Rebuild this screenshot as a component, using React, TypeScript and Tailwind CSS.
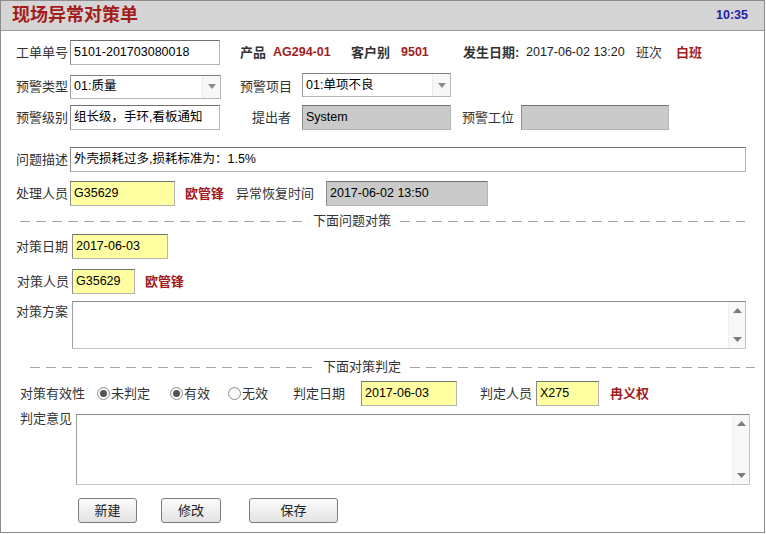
import React from "react";

const red = "text-[#a11d1d] font-bold";

function Box({ className, children }: { className: string; children?: React.ReactNode }) {
  return (
    <div
      className={
        "flex items-center h-[25px] px-[3px] border border-[#b4b4b4] border-t-[#707070] border-l-[#8c8c8c] text-[12.5px] text-black whitespace-nowrap overflow-hidden " +
        className
      }
    >
      {children}
    </div>
  );
}

function Select({ className, value }: { className: string; value: string }) {
  return (
    <div
      className={
        "flex items-center h-[24px] border border-[#b4b4b4] border-t-[#808080] border-l-[#9a9a9a] bg-white text-[12.5px] text-black " +
        className
      }
    >
      <span className="flex-1 pl-[3px] whitespace-nowrap">{value}</span>
      <span className="w-[18px] h-full flex items-center justify-center bg-[#f7f7f7] border-l border-[#ececec]">
        <svg width="8" height="5" viewBox="0 0 8 5">
          <path d="M0 0H8L4 5Z" fill="#8a8a8a" />
        </svg>
      </span>
    </div>
  );
}

function Area({ className }: { className: string }) {
  return (
    <div
      className={
        "flex border border-[#c4c4c4] border-t-[#8a8a8a] border-l-[#a0a0a0] bg-white " + className
      }
    >
      <div className="flex-1" />
      <div className="w-[17px] flex flex-col justify-between items-center py-[6px] bg-[#f8f8f8] border-l border-[#efefef]">
        <svg width="9" height="5" viewBox="0 0 9 5">
          <path d="M0 5H9L4.5 0Z" fill="#7a7a7a" />
        </svg>
        <svg width="9" height="5" viewBox="0 0 9 5">
          <path d="M0 0H9L4.5 5Z" fill="#7a7a7a" />
        </svg>
      </div>
    </div>
  );
}

function Radio({ checked }: { checked: boolean }) {
  return (
    <span className="w-[13px] h-[13px] rounded-full border border-[#8e8e8e] bg-linear-to-b from-[#f2f2f2] to-[#ffffff] flex items-center justify-center mr-[1px]">
      {checked ? <span className="w-[7px] h-[7px] rounded-full bg-[#555555]" /> : null}
    </span>
  );
}

function Btn({ className, label }: { className: string; label: string }) {
  return (
    <div
      className={
        "h-[25px] flex items-center justify-center rounded-[3px] border border-[#7d7d7d] bg-linear-to-b from-[#fbfbfb] to-[#e3e3e3] text-[13px] text-[#222] " +
        className
      }
    >
      {label}
    </div>
  );
}

const dash = "h-px bg-[image:repeating-linear-gradient(to_right,#a4a4a4_0_10px,transparent_10px_16px)]";

export default function App() {
  return (
    <div className="w-[766px] h-[534px] bg-white font-['Liberation_Sans','Noto_Sans_CJK_SC',sans-serif] text-[13px] text-[#333]">
      <div className="w-[765px] h-[533px] border border-[#8c8c8c] flex flex-col">
        {/* title bar */}
        <div className="h-[30px] bg-[#d5d5d5] border-b border-[#9c9c9c] flex items-center justify-between pl-[11px] pr-[16px]">
          <span className="text-[18px] font-bold text-[#a31d1d]">现场异常对策单</span>
          <span className="text-[12.5px] font-bold text-[#1f1fa6]">10:35</span>
        </div>

        <div className="flex flex-col pl-[15px]">
          {/* row 1 */}
          <div className="flex items-center h-[25px] mt-[9px]">
            <span className="w-[54px]">工单单号</span>
            <Box className="w-[150px] bg-white">5101-201703080018</Box>
            <span className="ml-[20px] w-[33px] font-bold">产品</span>
            <span className={"w-[78px] text-[12.5px] " + red}>AG294-01</span>
            <span className="w-[50px] font-bold">客户别</span>
            <span className={"w-[62px] text-[12.5px] " + red}>9501</span>
            <span className="w-[63px] font-bold">发生日期:</span>
            <span className="w-[110px] text-[12.5px] text-[#222]">2017-06-02 13:20</span>
            <span className="w-[40px]">班次</span>
            <span className={red}>白班</span>
          </div>

          {/* row 2 */}
          <div className="flex items-center h-[25px] mt-[9px]">
            <span className="w-[54px]">预警类型</span>
            <Select className="w-[151px]" value="01:质量" />
            <span className="ml-[19px] w-[62px]">预警项目</span>
            <Select className="w-[149px] -mt-[3px]" value="01:单项不良" />
          </div>

          {/* row 3 */}
          <div className="flex items-center h-[25px] mt-[6px]">
            <span className="w-[54px]">预警级别</span>
            <Box className="w-[150px] bg-white">组长级，手环,看板通知</Box>
            <span className="ml-[32px] w-[50px]">提出者</span>
            <Box className="w-[149px] bg-[#cacaca]">System</Box>
            <span className="ml-[11px] w-[59px]">预警工位</span>
            <Box className="w-[148px] bg-[#cacaca]" />
          </div>

          {/* row 4 */}
          <div className="flex items-center h-[25px] mt-[17px]">
            <span className="w-[54px]">问题描述</span>
            <Box className="w-[676px] bg-white">外壳损耗过多,损耗标准为：1.5%</Box>
          </div>

          {/* row 5 */}
          <div className="flex items-center h-[25px] mt-[9px]">
            <span className="w-[54px]">处理人员</span>
            <Box className="w-[105px] bg-[#ffffa2]">G35629</Box>
            <span className={"ml-[10px] w-[51px] " + red}>欧管锋</span>
            <span className="w-[90px]">异常恢复时间</span>
            <Box className="w-[162px] bg-[#cacaca]">2017-06-02 13:50</Box>
          </div>

          {/* divider 1 */}
          <div className="flex items-center h-[16px] mt-[7px]">
            <div className={"ml-[4px] w-[285px] " + dash} />
            <span className="ml-[8px] w-[78px]">下面问题对策</span>
            <div className={"ml-[9px] w-[345px] " + dash} />
          </div>

          {/* row 7 */}
          <div className="flex items-center h-[25px] mt-[5px]">
            <span className="w-[56px]">对策日期</span>
            <Box className="w-[96px] bg-[#ffffa2]">2017-06-03</Box>
          </div>

          {/* row 8 */}
          <div className="flex items-center h-[25px] mt-[10px]">
            <span className="w-[56px] pl-[1px]">对策人员</span>
            <Box className="w-[63px] bg-[#ffffa2]">G35629</Box>
            <span className={"ml-[10px] " + red}>欧管锋</span>
          </div>

          {/* row 9 */}
          <div className="flex items-start mt-[7px]">
            <span className="w-[56px] leading-[16px] mt-[3px]">对策方案</span>
            <Area className="w-[674px] h-[48px]" />
          </div>

          {/* divider 2 */}
          <div className="flex items-center h-[16px] mt-[10px]">
            <div className={"ml-[14px] w-[285px] " + dash} />
            <span className="ml-[8px] w-[78px]">下面对策判定</span>
            <div className={"ml-[9px] w-[345px] " + dash} />
          </div>

          {/* row 10 */}
          <div className="flex items-center h-[25px] mt-[6px] pl-[4px]">
            <span className="w-[77px]">对策有效性</span>
            <Radio checked />
            <span className="w-[59px]">未判定</span>
            <Radio checked />
            <span className="w-[44px]">有效</span>
            <Radio checked={false} />
            <span className="w-[51px]">无效</span>
            <span className="w-[68px]">判定日期</span>
            <Box className="w-[96px] bg-[#ffffa2]">2017-06-03</Box>
            <span className="ml-[23px] w-[56px]">判定人员</span>
            <Box className="w-[63px] bg-[#ffffa2]">X275</Box>
            <span className={"ml-[11px] " + red}>冉义权</span>
          </div>

          {/* row 11 */}
          <div className="flex items-start mt-[8px] pl-[4px]">
            <span className="w-[56px] leading-[16px] -mt-[3px]">判定意见</span>
            <Area className="w-[674px] h-[71px]" />
          </div>

          {/* buttons */}
          <div className="flex items-center mt-[13px] pl-[62px]">
            <Btn className="w-[59px]" label="新建" />
            <Btn className="ml-[24px] w-[60px]" label="修改" />
            <Btn className="ml-[28px] w-[89px]" label="保存" />
          </div>
        </div>
      </div>
    </div>
  );
}
